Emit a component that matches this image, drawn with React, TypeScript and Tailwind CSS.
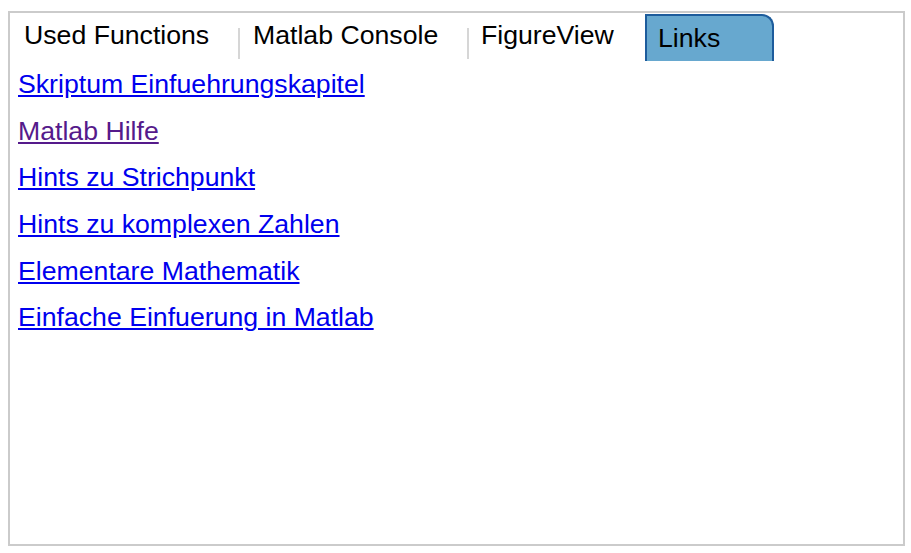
import React from "react";

const links: { text: string; visited?: boolean }[] = [
  { text: "Skriptum Einfuehrungskapitel" },
  { text: "Matlab Hilfe", visited: true },
  { text: "Hints zu Strichpunkt" },
  { text: "Hints zu komplexen Zahlen" },
  { text: "Elementare Mathematik" },
  { text: "Einfache Einfuerung in Matlab" },
];

export default function App() {
  return (
    <div
      className="w-[911px] h-[553px] bg-white overflow-hidden text-black"
      style={{ fontFamily: '"Liberation Sans", Arial, sans-serif' }}
    >
      <div className="ml-[8px] mt-[11px] w-[897px] h-[535px] border-2 border-[#cbcbcb] box-border">
        <div className="flex items-start h-[48px] text-[26.67px] leading-[30.67px]">
          <div className="w-[228px] pl-[14px] pt-[7px] whitespace-nowrap">Used Functions</div>
          <div className="w-[2px] h-[31px] mt-[15px] bg-[#d6d6d6]" />
          <div className="w-[227px] pl-[13px] pt-[7px] whitespace-nowrap">Matlab Console</div>
          <div className="w-[2px] h-[31px] mt-[15px] bg-[#d6d6d6]" />
          <div className="w-[176px] pl-[12px] pt-[7px] whitespace-nowrap">FigureView</div>
          <div className="w-[129px] h-[47px] mt-[1px] box-border border-2 border-b-0 border-[#1d5c9c] rounded-tr-[12px] bg-[#67a8cf] pl-[11px] pt-[7px] whitespace-nowrap">
            Links
          </div>
        </div>
        <div className="flex flex-col items-start pl-[8px] text-[26.67px] leading-[46.67px]">
          {links.map((l) => (
            <a
              key={l.text}
              href="#"
              className={
                "underline underline-offset-[2px] whitespace-nowrap " +
                (l.visited ? "text-[#551a8b]" : "text-[#0000ee]")
              }
            >
              {l.text}
            </a>
          ))}
        </div>
      </div>
    </div>
  );
}
